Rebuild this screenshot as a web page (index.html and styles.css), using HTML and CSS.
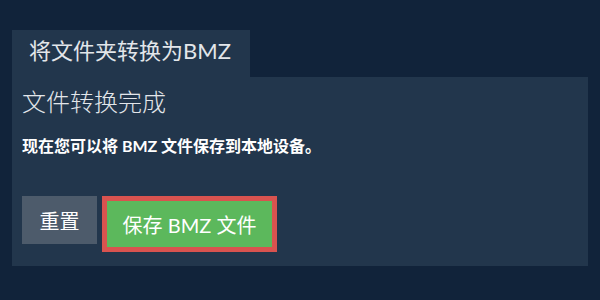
FILE: index.html
```html
<!DOCTYPE html>
<html lang="zh-CN">
<head>
  <meta charset="UTF-8">
  <meta name="viewport" content="width=device-width, initial-scale=1.0">
  <title>将文件夹转换为BMZ</title>
  <link rel="stylesheet" href="styles.css">
</head>
<body>
  <div class="converter">
    <div class="tabs">
      <div class="tab">将文件夹转换为BMZ</div>
    </div>
    <div class="panel">
      <h2>文件转换完成</h2>
      <p>现在您可以将 BMZ 文件保存到本地设备。</p>
      <div class="actions">
        <button class="btn btn-reset">重置</button>
        <button class="btn btn-save">保存 BMZ 文件</button>
      </div>
    </div>
  </div>
</body>
</html>
```

FILE: styles.css
```css
body {
  font-family: Lato, "Noto Sans CJK SC", sans-serif;
  margin: 0;
  padding: 30px 12px 0;
  background-color: #11233a;
  color: #e6e9ec;
}

.tabs {
  display: flex;
}

.tab {
  width: 238px;
  height: 47px;
  box-sizing: border-box;
  padding: 5px 0 0 17px;
  background-color: #22364c;
  font-size: 22px;
  line-height: 32px;
  color: #e3e6ea;
}

.panel {
  height: 189px;
  box-sizing: border-box;
  padding: 9px 10px 0;
  background-color: #22364c;
}

.panel h2 {
  margin: 0;
  font-size: 24px;
  font-weight: 300;
  line-height: 32px;
  color: #e3e6ea;
}

.panel p {
  margin: 17px 0 0;
  font-size: 16px;
  font-weight: bold;
  line-height: 22px;
  color: #ffffff;
}

.actions {
  display: flex;
  align-items: flex-start;
  gap: 5px;
  margin-top: 39px;
}

.btn {
  font-family: inherit;
  font-size: 20px;
  color: #ffffff;
  border: none;
  cursor: pointer;
  padding: 0;
}

.btn-reset {
  width: 75px;
  height: 48px;
  background-color: #4d5b6b;
}

.btn-save {
  width: 175px;
  height: 56px;
  background-color: #5cb85c;
  border: 5px solid #d9534f;
}
```
